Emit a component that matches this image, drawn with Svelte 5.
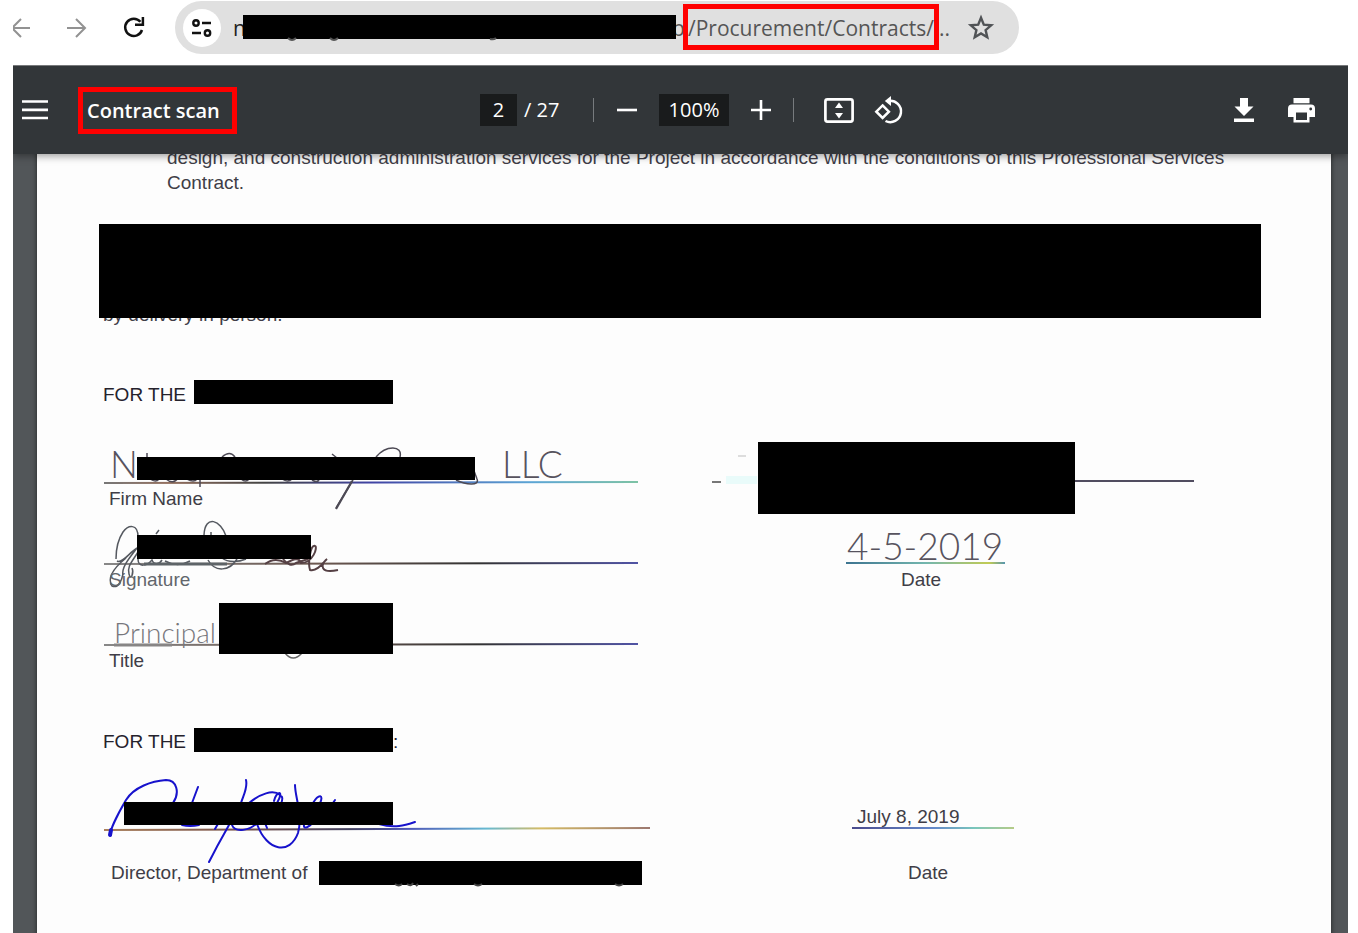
<script>
  let page = $state('2');
  let zoom = $state('100%');
</script>

<div class="window">
  <nav class="browser" aria-label="Browser">
    <button class="nav back" aria-label="Back">
      <svg width="18" height="20" viewBox="0 0 18 20"><path d="M17 10H0M8 1-1 10l9 9" fill="none" stroke="#929292" stroke-width="2" /></svg>
    </button>
    <button class="nav forward" aria-label="Forward">
      <svg width="20" height="20" viewBox="0 0 20 20"><path d="M0 10h18M9 1l9 9-9 9" fill="none" stroke="#929292" stroke-width="2" /></svg>
    </button>
    <button class="nav reload" aria-label="Reload">
      <svg width="22" height="22" viewBox="0 0 22 22"><path d="M16.4 4.8A8.6 8.6 0 1 0 18 13M11 7.8h7.9V0" fill="none" stroke="#111" stroke-width="2.5" /></svg>
    </button>
    <div class="address">
      <button class="site" aria-label="Site information">
        <svg width="20" height="18" viewBox="0 0 20 18" fill="none" stroke="#111" stroke-width="2.4"><circle cx="4" cy="4" r="2.7" /><path d="M10 4h9M0 14h9" /><circle cx="15.5" cy="14" r="2.7" /></svg>
      </button>
      <div class="url">
        <span class="host">n</span>
        <span class="redaction host-bar">
          <svg width="433" height="4" viewBox="0 0 433 4" fill="none" stroke="#555" stroke-width="2"><path d="M45 -1q4 4 8 0M87 -1q4 4 8 0M247 0q4 1 6-1" /></svg>
        </span>
        <span class="host-end">b</span>
        <span class="marked path">/Procurement/Contracts/</span>
        <span>..</span>
      </div>
      <button class="star" aria-label="Bookmark this page">
        <svg width="26" height="25" viewBox="0 0 26 25"><path d="m13 2.8 2.8 6.9 7.4.6-5.6 4.8 1.7 7.2-6.3-3.8-6.3 3.8 1.7-7.2-5.6-4.8 7.4-.6Z" fill="none" stroke="#505356" stroke-width="2.4" /></svg>
      </button>
    </div>
  </nav>

  <main class="viewer">
    <header class="toolbar">
      <div class="group">
        <button class="menu" aria-label="Menu"><svg width="26" height="20" viewBox="0 0 26 20"><path d="M0 1.5h26M0 9.8h26M0 18h26" stroke="#fff" stroke-width="2.7" /></svg></button>
        <h1 class="marked">Contract scan</h1>
      </div>
      <div class="group">
        <input class="page-no" aria-label="Page number" bind:value={page} />
        <span class="total">/ 27</span>
        <i class="divider"></i>
        <button class="minus" aria-label="Zoom out"><svg width="20" height="20" viewBox="0 0 20 20"><path d="M0 10h20" stroke="#fff" stroke-width="2.6" /></svg></button>
        <input class="zoom" aria-label="Zoom level" bind:value={zoom} />
        <button class="plus" aria-label="Zoom in"><svg width="20" height="20" viewBox="0 0 20 20"><path d="M0 10h20M10 0v20" stroke="#fff" stroke-width="2.6" /></svg></button>
        <i class="divider"></i>
        <button class="fit" aria-label="Fit to page"><svg width="30" height="25" viewBox="0 0 30 25"><rect x="1.4" y="1.4" width="27.2" height="22.2" rx="2" fill="none" stroke="#fff" stroke-width="2.7" /><path d="m15 4.5 4 5.5h-8ZM15 20.500l4-5.500h-8Z" fill="#fff" /></svg></button>
        <button class="rotate" aria-label="Rotate counterclockwise"><svg width="28" height="28" viewBox="0 0 28 28" fill="none" stroke="#fff" stroke-width="2.5"><path d="m8.600 9.400 6.300 6.300-6.300 6.300-6.300-6.300Z" /><path d="M14.500 4.900A10.700 10.700 0 1 1 11.500 25" /><path d="M17 0v10l-6.200-5Z" fill="#fff" stroke="none" /></svg></button>
      </div>
      <div class="group right">
        <button class="download" aria-label="Download"><svg width="20" height="24" viewBox="0 0 20 24" fill="#fff"><path d="M6 0h8v8.500h5.500L10 18 .5 8.500H6ZM0 20.500h20V24H0Z" /></svg></button>
        <button aria-label="Print"><svg width="27" height="25" viewBox="0 0 27 25"><path d="M5.500 0h16v5.200h-16ZM4 6.500h19a4 4 0 0 1 4 4V19h-5.500v5.500h-16V19H0v-8.500a4 4 0 0 1 4-4Z" fill="#fff" /><path d="M8 14.500h11V22H8Z" fill="#323639" /><circle cx="22.700" cy="11" r="1.400" fill="#323639" /></svg></button>
      </div>
    </header>

    <article class="paper">
      <p class="clause">design, and construction administration services for the Project in accordance with the conditions of this Professional Services Contract.</p>
      <div class="redaction paragraph-bar"></div>
      <p class="delivery">by delivery in person.</p>

      <h2>FOR THE <span class="redaction name-bar"></span></h2>
      <section class="fields">
        <div class="field">
          <svg width="540" height="51" viewBox="99 436 540 51" fill="none" stroke="#4d4a55" stroke-width="1.500">
            <defs>
              <linearGradient id="rule-a" gradientUnits="userSpaceOnUse" x1="104" x2="638" y1="0" y2="0"><stop offset="0" stop-color="#777" /><stop offset=".12" stop-color="#94705f" /><stop offset=".3" stop-color="#444" /><stop offset=".5" stop-color="#4144a4" /><stop offset=".8" stop-color="#5ca5d5" /><stop offset="1" stop-color="#7ec3a5" /></linearGradient>
            </defs>
            <path d="M104 483 638 482" stroke="url(#rule-a)" stroke-width="2" />
            <text class="hand" x="110" y="478">No</text>
            <path d="M147 453v5M222 457q8-7 13 0M332 454l5 4M376 457c10-12 27-12 24 0" />
            <path d="M150 479q6 4 9 0M166 479q7 6 12-1M187 479q7 4 10 0M200 478v9M241 479q5 4 8 0M282 479q6 4 10 0M312 480q5 3 7 0M353 480 336 508M456 480c10 5 24 6 21-1l-4-11" />
            <path d="M352 481 336 509" stroke-width="2.200" />
            <text class="hand" x="502" y="478">LLC</text>
            <rect x="137" y="457" width="338" height="23" fill="#000" stroke="none" />
          </svg>
          <span class="label">Firm Name</span>
        </div>
        <div class="field">
          <svg width="500" height="51" viewBox="700 436 500 51" fill="none">
            <path d="M712 482h9" stroke="#777" stroke-width="2" />
            <path d="M738 456h8" stroke="#ddd" stroke-width="2" />
            <path d="M726 480h31" stroke="#e9fbfa" stroke-width="8" />
            <path d="M1075 481h119" stroke="#514d60" stroke-width="2" />
            <rect x="758" y="442" width="317" height="72" fill="#000" />
          </svg>
        </div>
        <div class="field">
          <svg width="540" height="51" viewBox="99 517 540 51" fill="none" stroke="#555960" stroke-width="1.500">
            <defs><linearGradient id="rule-b" gradientUnits="userSpaceOnUse" x1="104" x2="638" y1="0" y2="0"><stop offset="0" stop-color="#888" /><stop offset=".4" stop-color="#6c5850" /><stop offset=".7" stop-color="#333" /><stop offset="1" stop-color="#5154a5" /></linearGradient></defs>
            <path d="M104 564 638 563" stroke="url(#rule-b)" stroke-width="2" />
            <path d="M138 537c0-14-10-12-15-5-4 6-7 17-7 27M117 561c5 3 12-8 20-13-6 8-16 19-14 27M138 552c-6 10-11 14-9 22 2 8 5-2 3-6" />
            <path d="M126 558c-11 9-20 19-14 28 7 3 10-7 11-12M138 559c0 9 9 7 14 1 2 5 7 5 10 0M165 561c9 5 18 4 25 0M156 534l3-4M211 532v5M204 535c1-21 17-15 22 1M208 560c7 13 22 11 29-1M222 558c6 5 17 4 24 1" />
            <path d="M144 564h83" stroke="#5e6468" stroke-width="3" />
            <path d="M265 564c9-7 16-4 21-1 8-4 13-6 15 0 12 0 17-16 14-17-5-2-7 18-5 24 8 2 14-9 17-11-7 6-7 15 11 11" stroke="#554044" stroke-width="2" />
            <path d="M283 559q7 9 13 4l12-4" stroke="#554044" stroke-width="2" />
            <rect x="137" y="535" width="174" height="24" fill="#000" stroke="none" />
          </svg>
          <span class="label signature">Signature</span>
        </div>
        <div class="field">
          <svg width="500" height="51" viewBox="700 517 500 51">
            <defs><linearGradient id="rule-date"><stop offset="0" stop-color="#3d7490" /><stop offset=".5" stop-color="#73b6ae" /><stop offset=".9" stop-color="#c2cb54" /><stop offset="1" stop-color="#5696ae" /></linearGradient></defs>
            <rect x="846" y="562" width="159" height="2" fill="url(#rule-date)" />
            <text class="hand" x="847" y="560">4-5-2019</text>
          </svg>
          <span class="label date-label">Date</span>
        </div>
        <div class="field">
          <svg width="540" height="51" viewBox="99 598 540 51" fill="none">
            <path d="M104 645 638 644" stroke="url(#rule-b)" stroke-width="2" />
            <path d="M114 645h58" stroke="#878585" stroke-width="3" />
            <text class="hand title" x="114" y="643">Principal</text>
            <path d="M285 653q8 10 17 0" stroke="#666" stroke-width="1.500" />
            <rect x="219" y="603" width="174" height="51" fill="#000" />
          </svg>
          <span class="label">Title</span>
        </div>
      </section>

      <h2 class="second">FOR THE <span class="redaction name-bar"></span><span class="colon">:</span></h2>
      <section class="fields">
        <div class="field">
          <svg width="540" height="82" viewBox="99 780 540 82" fill="none" stroke="#1712cc" stroke-width="2" stroke-linecap="round">
            <defs><linearGradient id="rule-c" gradientUnits="userSpaceOnUse" x1="104" x2="650" y1="0" y2="0"><stop offset="0" stop-color="#aa805c" /><stop offset=".25" stop-color="#765048" /><stop offset=".45" stop-color="#434160" /><stop offset=".56" stop-color="#4f58b8" /><stop offset=".7" stop-color="#66b9d1" /><stop offset=".8" stop-color="#d4bb65" /><stop offset="1" stop-color="#9c7870" /></linearGradient></defs>
            <path d="M104 831 650 829" stroke="url(#rule-c)" stroke-linecap="butt" />
            <path d="M111 836c-3-2 8-23 15-35 8-13 26-19 40-20 11 0 14 13 7 23M198 788l-6 16M182 826q8 2 17 0M215 830l4-7M246 781c2 8-3 16-5 23M249 804c11-9 24-14 31-8M277 804c8-14-1-12-3-2M280 797q4 0 1 8M295 786c0 12 8 30 3 48-8 22-31 19-41-9M232 826c3 8 18 6 26-3M229 826c-4 7-11 19-20 37M304 826c-1 5 6 2 9-3M313 804c6-10 11-8 7 0M333 804l2-3M265 824l2 5M379 825c16 5 27 1 36-2" />
            <path d="M111 831l-1 5" stroke-width="4" />
            <rect x="124" y="803" width="269" height="23" fill="#000" stroke="none" />
          </svg>
          <span class="label director">Director, Department of
            <span class="redaction department-bar"><svg width="323" height="4" viewBox="0 0 323 4" fill="none" stroke="#444" stroke-width="2"><path d="M76 -1q4 3 7 0M88 -1q4 3 6-1M99 -1l-2 2M155 -1q4 3 8 0M296 -1q4 3 8 0" /></svg></span>
          </span>
        </div>
        <div class="field">
          <div class="dated">
            <span>July 8, 2019</span>
          </div>
          <span class="label date-label later">Date</span>
        </div>
      </section>
    </article>
  </main>
</div>

<style>
  :global(body) { margin: 0; background: #fff; }
  .window { height: 100vh; overflow: hidden; display: flex; flex-direction: column; padding: 0 10px 0 13px; box-sizing: border-box; }
  button { border: 0; padding: 0; background: none; display: flex; align-items: center; justify-content: center; flex: none; }
  svg { display: block; overflow: visible; flex: none; }
  h1, h2, p { margin: 0; }
  .redaction { background: #000; display: block; flex: none; }
  .marked { border: 5px solid #f00; box-sizing: border-box; }

  .browser { height: 65px; flex: none; display: flex; align-items: flex-start; }
  .nav { height: 55px; }
  .back svg { overflow: hidden; }
  .forward { margin-left: 36px; }
  .reload { margin-left: 37px; }
  .address { margin: 1px 0 0 29px; height: 53px; padding: 0 25px 0 8px; border-radius: 27px; background: #e0e0e0; display: flex; align-items: center; }
  .site { width: 38px; height: 38px; border-radius: 50%; background: #fff; }
  .url { display: flex; align-items: center; margin-left: 12px; font: 21px/36px "Open Sans", "Noto Sans", sans-serif; color: #555; }
  .host { width: 10px; color: #222; }
  .host-bar { position: relative; z-index: 1; width: 433px; height: 24px; margin-bottom: 2px; }
  .host-bar svg { padding-top: 24px; }
  .host-end { width: 11px; margin-left: -4px; }
  .path { position: relative; height: 46px; margin-bottom: 2px; line-height: 38px; }
  .star { margin-left: 18px; }

  .viewer { flex: 1; min-height: 0; background: #525659; overflow: hidden; }
  .toolbar { position: relative; z-index: 1; height: 89px; box-sizing: border-box; padding: 0 33px 0 9px; border-top: 1px solid #77797b; background: #323639; box-shadow: 0 2px 8px #0006; display: grid; grid-template-columns: 458fr auto 413fr; align-items: center; }
  .group { display: flex; align-items: center; color: #fff; font: 20px/32px "Open Sans", "Noto Sans", sans-serif; }
  .right { justify-content: flex-end; }
  h1 { height: 47px; margin-left: 30px; padding: 0 12px 0 4px; font: 600 20px/38px "Open Sans", "Noto Sans", sans-serif; white-space: nowrap; }
  input { height: 32px; border: 0; padding: 0; box-sizing: border-box; background: #191b1c; color: #fff; font: inherit; text-align: center; border-radius: 0; }
  .page-no { width: 37px; }
  .total { width: 69px; padding-left: 7px; }
  .divider { width: 1px; height: 24px; background: #777b7e; }
  .minus { margin-left: 23px; }
  .zoom { width: 70px; margin: 0 22px; }
  .plus { margin-right: 22px; }
  .fit { margin: 0 20px 0 30px; }
  .download { margin-right: 34px; }

  .paper { margin: -9px 17px 0 24px; padding: 0 70px 0 62px; min-height: 800px; background: #fdfdfd; box-shadow: 0 0 5px #0009; color: #403d47; font: 19px/24px "Liberation Sans", Arial, sans-serif; }
  .clause { margin-left: 68px; line-height: 25px; }
  .paragraph-bar { position: relative; z-index: 1; height: 94px; margin-top: 29px; }
  .delivery { margin: -15px 0 0 4px; }
  h2 { display: flex; align-items: flex-start; height: 30px; margin-top: 53px; padding-left: 4px; font: inherit; line-height: 30px; color: #25222c; }
  .name-bar { width: 199px; height: 24px; margin-left: 8px; }
  .colon { width: 5px; }
  .second { margin-top: 48px; }
  .second .name-bar { margin-top: 1px; }
  .fields { display: grid; grid-template-columns: 601fr 561fr; margin-top: 26px; }
  .second + .fields { margin-top: 22px; }
  .field { display: flex; flex-direction: column; padding-bottom: 6px; min-width: 0; }
  .label { padding-left: 10px; white-space: nowrap; }
  .signature { color: #62666c; }
  .date-label { padding-left: 201px; }
  .later { padding-left: 208px; }
  .director { display: flex; gap: 12px; padding-left: 12px; }
  .department-bar { width: 323px; height: 24px; }
  .department-bar svg { padding-top: 24px; }
  .dated { height: 82px; padding: 26px 0 0 152px; box-sizing: border-box; }
  .dated span { display: block; width: 162px; height: 24px; padding-left: 5px; box-sizing: border-box; border-bottom: 2px solid; border-image: linear-gradient(90deg, #4a4a8c, #6488c9 50%, #79c6bd 75%, #b7cc86) 1; }
  .hand { font: 300 37px "Lato", sans-serif; fill: #57535e; stroke: none; }
  .title { font-size: 28px; fill: #77777c; }
</style>
